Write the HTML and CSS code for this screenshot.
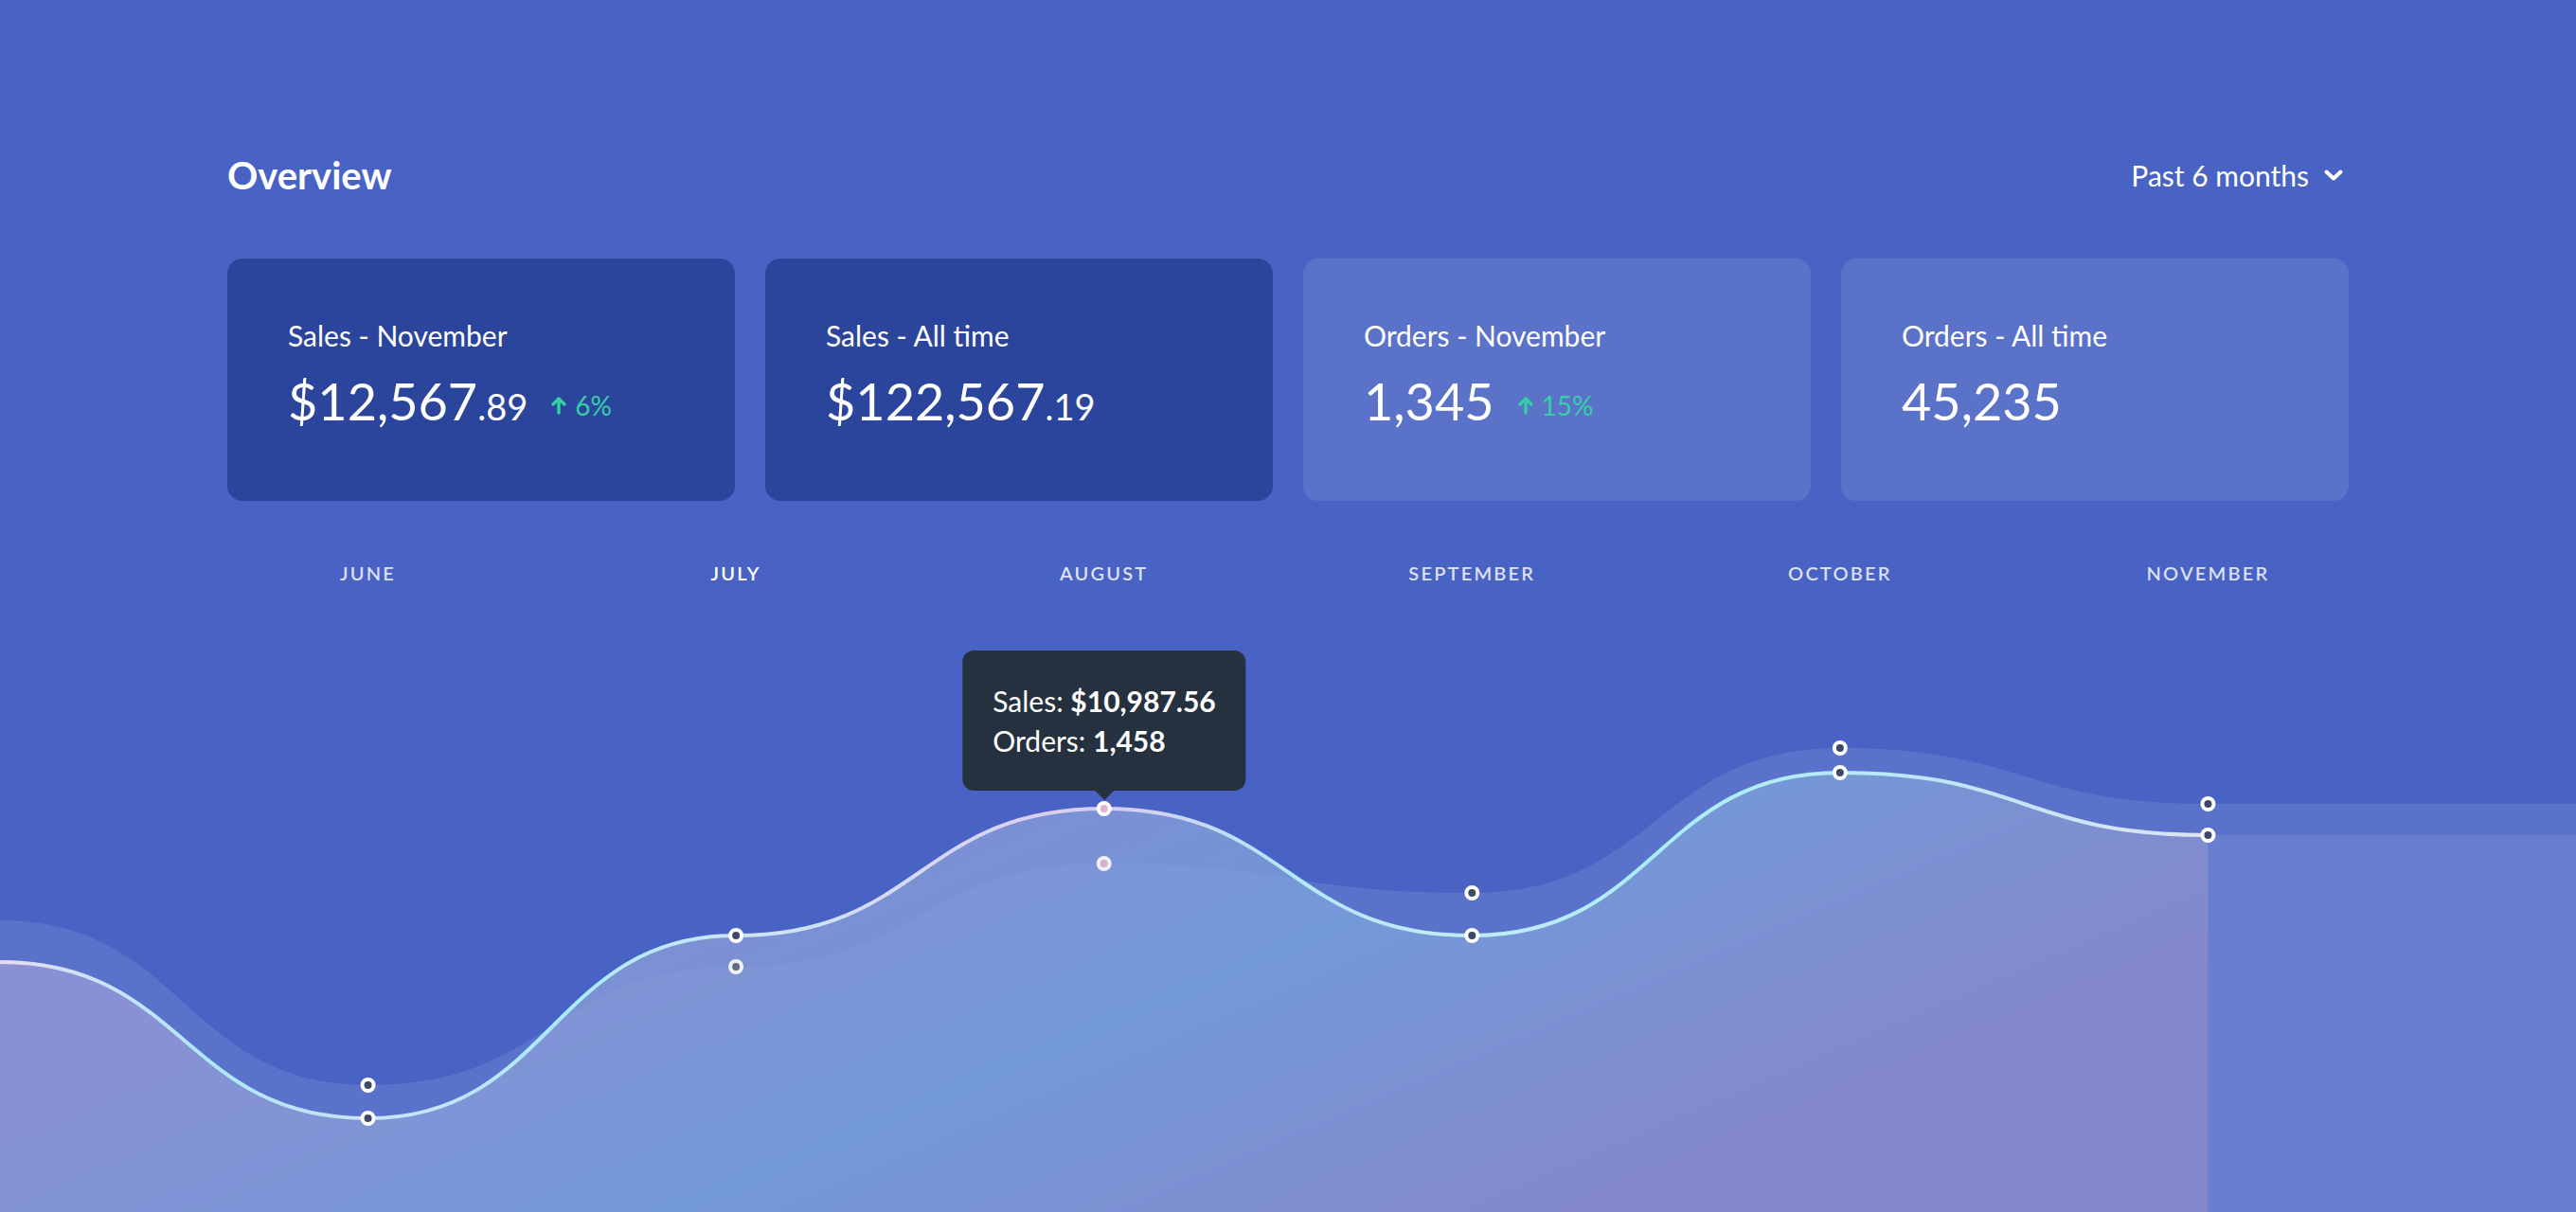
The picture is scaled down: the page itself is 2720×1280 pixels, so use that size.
FILE: index.html
```html
<!DOCTYPE html>
<html lang="en">
<head>
<meta charset="utf-8">
<title>Overview</title>
<link rel="stylesheet" href="styles.css">
</head>
<body>
<div class="page">
  <div class="container">
    <header class="head">
      <h1 class="title">Overview</h1>
      <button class="range" type="button">
        <span>Past 6 months</span>
        <svg class="chev" viewBox="0 0 20 12" width="20" height="12" aria-hidden="true"><polyline points="2.5,2.5 10,9.5 17.5,2.5" fill="none" stroke="#fff" stroke-width="4" stroke-linecap="round" stroke-linejoin="round"/></svg>
      </button>
    </header>
    <div class="cards">
      <div class="card card-dark">
        <div class="card-label">Sales - November</div>
        <div class="card-value"><span class="num">$12,567</span><span class="cents">.89</span>
          <span class="delta"><svg class="up" viewBox="0 0 18 20" width="18" height="20" aria-hidden="true"><path d="M9 18V3M3 9L9 3 15 9" fill="none" stroke="currentColor" stroke-width="3.4" stroke-linecap="round" stroke-linejoin="round"/></svg>6%</span>
        </div>
      </div>
      <div class="card card-dark">
        <div class="card-label">Sales - All time</div>
        <div class="card-value"><span class="num">$122,567</span><span class="cents">.19</span></div>
      </div>
      <div class="card card-light">
        <div class="card-label">Orders - November</div>
        <div class="card-value"><span class="num">1,345</span>
          <span class="delta"><svg class="up" viewBox="0 0 18 20" width="18" height="20" aria-hidden="true"><path d="M9 18V3M3 9L9 3 15 9" fill="none" stroke="currentColor" stroke-width="3.4" stroke-linecap="round" stroke-linejoin="round"/></svg>15%</span>
        </div>
      </div>
      <div class="card card-light">
        <div class="card-label">Orders - All time</div>
        <div class="card-value"><span class="num">45,235</span></div>
      </div>
    </div>
  </div>

  <div class="months">
    <span class="month">June</span>
    <span class="month month-current">July</span>
    <span class="month">August</span>
    <span class="month">September</span>
    <span class="month">October</span>
    <span class="month">November</span>
  </div>

  <div class="chart">
    <svg class="chart-svg" viewBox="0 616 2720 664" width="2720" height="664" preserveAspectRatio="none" aria-hidden="true">
      <defs>
        <linearGradient id="areaGrad" gradientUnits="userSpaceOnUse" x1="415" y1="965" x2="735" y2="1709">
          <stop offset="0" stop-color="#999bd8"/>
          <stop offset="0.5" stop-color="#7ca6dc"/>
          <stop offset="1" stop-color="#938ecc"/>
        </linearGradient>
        <linearGradient id="lineGrad" gradientUnits="userSpaceOnUse" x1="0" y1="0" x2="2720" y2="0">
          <stop offset="0" stop-color="#e8dcf4"/>
          <stop offset="0.08" stop-color="#ace8f8"/>
          <stop offset="0.143" stop-color="#cce2f6"/>
          <stop offset="0.22" stop-color="#a8ecfa"/>
          <stop offset="0.286" stop-color="#cce6f6"/>
          <stop offset="0.36" stop-color="#d6d8f2"/>
          <stop offset="0.429" stop-color="#dccaee"/>
          <stop offset="0.5" stop-color="#b2e8f8"/>
          <stop offset="0.571" stop-color="#c2eaf8"/>
          <stop offset="0.64" stop-color="#a8eefa"/>
          <stop offset="0.714" stop-color="#b6eaf8"/>
          <stop offset="0.78" stop-color="#c4e4f6"/>
          <stop offset="0.857" stop-color="#dce4f2"/>
        </linearGradient>
      </defs>

      <path class="area-back" d="M0,971 C194.29,971 194.29,1145 388.57,1145 C582.86,1145 582.86,1020 777.14,1020 C971.43,1020 971.43,911 1165.71,911 C1360,911 1360,942 1554.29,942 C1748.57,942 1748.57,789 1942.86,789 C2137.14,789 2137.14,848 2331.43,848 L2720,848 L2720,1280 L0,1280 Z"/>
      <rect class="area-rest" x="2331.43" y="881" width="388.57" height="399"/>
      <path class="area-front" d="M0,1015 C194.29,1015 194.29,1180 388.57,1180 C582.86,1180 582.86,987 777.14,987 C971.43,987 971.43,853 1165.71,853 C1360,853 1360,987 1554.29,987 C1748.57,987 1748.57,815 1942.86,815 C2137.14,815 2137.14,881 2331.43,881 L2331.43,1280 L0,1280 Z"/>
      <path class="line" d="M0,1015 C194.29,1015 194.29,1180 388.57,1180 C582.86,1180 582.86,987 777.14,987 C971.43,987 971.43,853 1165.71,853 C1360,853 1360,987 1554.29,987 C1748.57,987 1748.57,815 1942.86,815 C2137.14,815 2137.14,881 2331.43,881"/>

      <g class="dots-orders">
        <circle cx="388.57" cy="1145" r="6"/>
        <circle class="under" cx="777.14" cy="1020" r="6"/>
        <circle class="under active" cx="1165.71" cy="911" r="6"/>
        <circle cx="1554.29" cy="942" r="6"/>
        <circle cx="1942.86" cy="789" r="6"/>
        <circle cx="2331.43" cy="848" r="6"/>
      </g>
      <g class="dots-sales">
        <circle cx="388.57" cy="1180" r="6"/>
        <circle cx="777.14" cy="987" r="6"/>
        <circle class="active" cx="1165.71" cy="853" r="6"/>
        <circle cx="1554.29" cy="987" r="6"/>
        <circle cx="1942.86" cy="815" r="6"/>
        <circle cx="2331.43" cy="881" r="6"/>
      </g>
    </svg>

    <div class="tooltip">
      <div>Sales: <strong>$10,987.56</strong></div>
      <div>Orders: <strong>1,458</strong></div>
    </div>
  </div>
</div>
</body>
</html>
```

FILE: styles.css
```css
* { box-sizing: border-box; }

html, body {
  margin: 0;
  padding: 0;
}

body {
  font-family: "Lato", "Open Sans", sans-serif;
  color: #fff;
  background: #4863c4;
}

.page {
  width: 2720px;
  height: 1280px;
  overflow: hidden;
  display: flex;
  flex-direction: column;
  background: #4863c4;
}

.container {
  width: 2240px;
  margin: 0 auto;
  padding-top: 161px;
  flex: none;
}

.head {
  display: flex;
  justify-content: space-between;
  align-items: center;
  height: 48px;
  margin-bottom: 64px;
}

.title {
  margin: 0;
  font-size: 40px;
  line-height: 48px;
  font-weight: 700;
  color: #fff;
}

.range {
  display: flex;
  align-items: center;
  gap: 16px;
  padding: 0;
  margin: 0 6px 0 0;
  border: 0;
  background: none;
  color: #fff;
  font-family: inherit;
  font-size: 30px;
  line-height: 36px;
  cursor: pointer;
}

.chev {
  display: block;
  width: 20px;
  height: 12px;
}

.cards {
  display: grid;
  grid-template-columns: repeat(4, 1fr);
  gap: 32px;
}

.card {
  height: 256px;
  border-radius: 16px;
  padding: 62px 64px 0;
}

.card-dark { background: #2b449c; }
.card-light { background: #5a72c8; }

.card-label {
  font-size: 30px;
  line-height: 38px;
  color: #fff;
}

.card-value {
  margin-top: 17px;
  display: flex;
  align-items: baseline;
  height: 67px;
  line-height: 67px;
  white-space: nowrap;
}

.num {
  font-size: 54px;
}

.cents {
  font-size: 38px;
}

.delta {
  align-self: center;
  margin-top: 8px;
  margin-left: 24px;
  display: inline-flex;
  align-items: center;
  gap: 8px;
  font-size: 28px;
  line-height: 34px;
  color: #35cfa6;
}

.up {
  display: block;
  width: 18px;
  height: 20px;
}

.months {
  flex: none;
  margin-top: 64px;
  padding: 0 194.29px;
  display: grid;
  grid-template-columns: repeat(6, 1fr);
  height: 24px;
}

.month {
  text-align: center;
  font-size: 20px;
  line-height: 24px;
  font-weight: 600;
  letter-spacing: 2.2px;
  text-transform: uppercase;
  color: rgba(255, 255, 255, 0.82);
}

.month-current { color: #fff; }

.chart {
  flex: 1;
  position: relative;
}

.chart-svg {
  display: block;
  width: 2720px;
  height: 664px;
}

.area-back { fill: rgba(255, 255, 255, 0.1); }
.area-rest { fill: rgba(255, 255, 255, 0.09); }
.area-front { fill: url(#areaGrad); fill-opacity: 0.75; }

.line {
  fill: none;
  stroke: url(#lineGrad);
  stroke-width: 4;
}

.dots-sales circle,
.dots-orders circle {
  fill: #3b4a66;
  stroke: #fff;
  stroke-width: 4;
}

.dots-orders circle.under { fill: #5f6a82; stroke: #eef0f8; }
.dots-sales circle.active { fill: #e2b2d2; }
.dots-orders circle.active { fill: #d8aed2; }

.tooltip {
  position: absolute;
  left: 1166px;
  top: 70px;
  transform: translateX(-50%);
  padding: 32px;
  background: #263140;
  border-radius: 12px;
  font-size: 30px;
  line-height: 42px;
  color: #fff;
  white-space: nowrap;
}

.tooltip strong { font-weight: 700; }

.tooltip::after {
  content: "";
  position: absolute;
  left: 50%;
  bottom: -10px;
  margin-left: -10px;
  border-left: 10px solid transparent;
  border-right: 10px solid transparent;
  border-top: 10px solid #263140;
}
```
